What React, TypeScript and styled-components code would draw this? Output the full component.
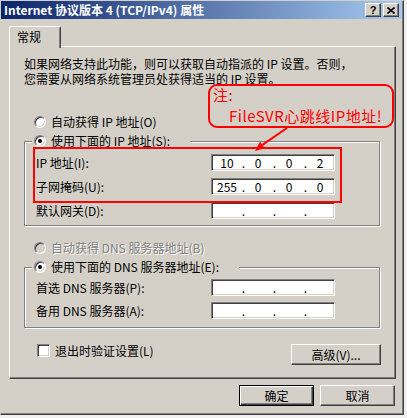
import React from "react";
import styled, { createGlobalStyle } from "styled-components";

const GlobalStyle = createGlobalStyle`
  html, body {
    margin: 0;
    padding: 0;
    background: #f0f0f0;
  }
  body {
    font-family: "Noto Sans CJK SC", "Noto Sans", sans-serif;
    font-size: 12px;
    color: #000;
  }
`;

const IP_ROWS = [
  { label: "IP 地址(I):", value: ["10", "0", "0", "2"] },
  { label: "子网掩码(U):", value: ["255", "0", "0", "0"] },
  { label: "默认网关(D):", value: ["", "", "", ""] },
];

const DNS_ROWS = [
  { label: "首选 DNS 服务器(P):", value: ["", "", "", ""] },
  { label: "备用 DNS 服务器(A):", value: ["", "", "", ""] },
];

function IpField({ value }: { value: string[] }) {
  return (
    <IpBox>
      {value.map((octet, idx) => (
        <React.Fragment key={idx}>
          {idx > 0 && <Dot>.</Dot>}
          <Octet>{octet}</Octet>
        </React.Fragment>
      ))}
    </IpBox>
  );
}

export default function App() {
  const ipRows = IP_ROWS.map((row) => (
    <React.Fragment key={row.label}>
      <FieldLabel>{row.label}</FieldLabel>
      <IpField value={row.value} />
    </React.Fragment>
  ));

  const dnsRows = DNS_ROWS.map((row) => (
    <React.Fragment key={row.label}>
      <FieldLabel>{row.label}</FieldLabel>
      <IpField value={row.value} />
    </React.Fragment>
  ));

  return (
    <>
      <GlobalStyle />
      <Window>
        <TitleBar>
          <TitleText>Internet 协议版本 4 (TCP/IPv4) 属性</TitleText>
          <CaptionButtons>
            <CaptionButton>?</CaptionButton>
            <CaptionButton>
              <svg width="8" height="7" viewBox="0 0 8 7">
                <path d="M0.5 0.5 L7.5 6.5 M7.5 0.5 L0.5 6.5" stroke="#000" strokeWidth="1.6" />
              </svg>
            </CaptionButton>
          </CaptionButtons>
        </TitleBar>

        <Body>
          <TabStrip>
            <Tab>常规</Tab>
          </TabStrip>
          <Panel>
            <Intro>
              如果网络支持此功能，则可以获取自动指派的 IP 设置。否则，
              <br />
              您需要从网络系统管理员处获得适当的 IP 设置。
            </Intro>

            <ChoiceRow $top={29}>
              <Radio />
              <span>自动获得 IP 地址(O)</span>
            </ChoiceRow>

            <GroupBox $top={5} $padTop={6} $padBottom={6}>
              <Legend>
                <Radio $checked />
                <span>使用下面的 IP 地址(S):</span>
              </Legend>
              <FieldRows $gap={7}>{ipRows}</FieldRows>
            </GroupBox>

            <ChoiceRow $top={15} $disabled>
              <Radio $disabled />
              <span>自动获得 DNS 服务器地址(B)</span>
            </ChoiceRow>

            <GroupBox $top={5} $padTop={5} $padBottom={8}>
              <Legend>
                <Radio $checked />
                <span>使用下面的 DNS 服务器地址(E):</span>
              </Legend>
              <FieldRows $gap={6}>{dnsRows}</FieldRows>
            </GroupBox>

            <OptionsRow>
              <CheckLabel>
                <CheckBox />
                <span>退出时验证设置(L)</span>
              </CheckLabel>
              <PushButton $width={90}>高级(V)...</PushButton>
            </OptionsRow>
          </Panel>

          <Footer>
            <PushButton $width={75} $default>
              确定
            </PushButton>
            <PushButton $width={75}>取消</PushButton>
          </Footer>
        </Body>

        {/* red annotation drawn over the dialog */}
        <Highlight />
        <Callout>
          <CalloutLine>注:</CalloutLine>
          <CalloutLine $indent>FileSVR心跳线IP地址!</CalloutLine>
        </Callout>
        <Arrow width="60" height="35" viewBox="0 0 60 35">
          <line x1="46" y1="7" x2="21.4" y2="23.9" stroke="#ff0000" strokeWidth="2" />
          <polygon points="14,30 23.7,27.2 19.1,20.6" fill="#ff0000" />
        </Arrow>
      </Window>
    </>
  );
}

const Window = styled.div`
  position: relative;
  width: 404px;
  height: 415px;
  box-sizing: border-box;
  display: flex;
  flex-direction: column;
  padding: 0 1px 1px 0;
  background: #d4d0c8;
  border: 1px solid;
  border-color: #d4d0c8 #404040 #404040 #d4d0c8;
  box-shadow: inset -1px -1px 0 #808080;
`;

const TitleBar = styled.div`
  height: 18px;
  flex-shrink: 0;
  display: flex;
  align-items: center;
  padding: 0 3px;
  background: linear-gradient(to right, #0a246a, #a6caf0);
`;

const TitleText = styled.span`
  color: #fff;
  font-weight: bold;
  line-height: 18px;
  white-space: nowrap;
`;

const CaptionButtons = styled.div`
  margin-left: auto;
  display: flex;
  gap: 2px;
`;

const CaptionButton = styled.button`
  width: 16px;
  height: 14px;
  box-sizing: border-box;
  padding: 0;
  display: flex;
  align-items: center;
  justify-content: center;
  background: #d4d0c8;
  border: 1px solid;
  border-color: #fff #404040 #404040 #fff;
  box-shadow: inset -1px -1px 0 #808080;
  font: bold 11px "Liberation Sans", sans-serif;
  color: #000;
`;

const Body = styled.div`
  flex: 1;
  display: flex;
  flex-direction: column;
  padding: 7px 6px 0 8px;
`;

const TabStrip = styled.div`
  height: 20px;
  flex-shrink: 0;
  display: flex;
  align-items: flex-start;
`;

const Tab = styled.div`
  position: relative;
  z-index: 1;
  width: 52px;
  height: 22px;
  box-sizing: border-box;
  padding: 2px 0 0 7px;
  line-height: 16px;
  background: #d4d0c8;
  border-left: 1px solid #fff;
  border-top: 1px solid #fff;
  border-right: 1px solid #404040;
  border-radius: 2px 2px 0 0;
  box-shadow: inset -1px 0 0 #808080;
`;

const Panel = styled.div`
  height: 333px;
  flex-shrink: 0;
  box-sizing: border-box;
  display: flex;
  flex-direction: column;
  padding: 9px 14px 0 14px;
  border: 1px solid;
  border-color: #fff #404040 #404040 #fff;
  box-shadow: inset -1px -1px 0 #808080;
`;

const Intro = styled.p`
  margin: 0;
  line-height: 15px;
  white-space: nowrap;
`;

const ChoiceRow = styled.div<{ $top: number; $disabled?: boolean }>`
  margin-top: ${(p) => p.$top}px;
  height: 14px;
  display: flex;
  align-items: center;
  gap: 5px;
  padding-left: 10px;
  line-height: 14px;
  white-space: nowrap;
  color: ${(p) => (p.$disabled ? "#808080" : "#000")};
  text-shadow: ${(p) => (p.$disabled ? "1px 1px 0 #fff" : "none")};
`;

const Radio = styled.span<{ $checked?: boolean; $disabled?: boolean }>`
  position: relative;
  flex-shrink: 0;
  width: 12px;
  height: 12px;
  box-sizing: border-box;
  border-radius: 50%;
  background: ${(p) => (p.$disabled ? "#d4d0c8" : "#fff")};
  border: 1px solid;
  border-color: #808080 #fff #fff #808080;
  box-shadow: inset 1px 1px 0 #404040, inset -1px -1px 0 #d4d0c8;

  &::after {
    content: "";
    display: ${(p) => (p.$checked ? "block" : "none")};
    position: absolute;
    left: 3px;
    top: 3px;
    width: 4px;
    height: 4px;
    border-radius: 50%;
    background: #000;
  }
`;

const GroupBox = styled.fieldset<{ $top: number; $padTop: number; $padBottom: number }>`
  margin: ${(p) => p.$top}px 0 0 0;
  width: 356px;
  min-width: 0;
  box-sizing: border-box;
  padding: ${(p) => p.$padTop}px 0 ${(p) => p.$padBottom}px 0;
  border: 1px solid #808080;
  box-shadow: inset 1px 1px 0 #fff, 1px 1px 0 #fff;
`;

const Legend = styled.legend`
  margin-left: 7px;
  padding: 0 20px 0 2px;
  height: 14px;
  display: flex;
  align-items: center;
  gap: 5px;
  line-height: 14px;
  white-space: nowrap;
  background: #d4d0c8;
`;

const FieldRows = styled.div<{ $gap: number }>`
  display: grid;
  grid-template-columns: 175px 124px;
  row-gap: ${(p) => p.$gap}px;
  align-items: center;
  padding-left: 11px;
`;

const FieldLabel = styled.span`
  line-height: 17px;
  white-space: nowrap;
`;

const IpBox = styled.div`
  width: 124px;
  height: 17px;
  box-sizing: border-box;
  display: flex;
  align-items: center;
  padding-left: 2px;
  background: #fff;
  border: 1px solid;
  border-color: #808080 #fff #fff #808080;
  box-shadow: inset 1px 1px 0 #404040, inset -1px -1px 0 #d4d0c8;
`;

const Octet = styled.span`
  flex-shrink: 0;
  width: 26px;
  text-align: center;
  line-height: 15px;
`;

const Dot = styled.span`
  flex-shrink: 0;
  width: 5px;
  text-align: right;
  line-height: 15px;
`;

const OptionsRow = styled.div`
  margin-top: 16px;
  display: flex;
  justify-content: space-between;
  align-items: flex-start;
`;

const CheckLabel = styled.label`
  display: flex;
  align-items: center;
  gap: 5px;
  padding-left: 13px;
  height: 13px;
  line-height: 13px;
  white-space: nowrap;
`;

const CheckBox = styled.span`
  width: 13px;
  height: 13px;
  box-sizing: border-box;
  background: #fff;
  border: 1px solid;
  border-color: #808080 #fff #fff #808080;
  box-shadow: inset 1px 1px 0 #404040, inset -1px -1px 0 #d4d0c8;
`;

const PushButton = styled.button<{ $width: number; $default?: boolean }>`
  width: ${(p) => p.$width}px;
  height: 21px;
  box-sizing: border-box;
  padding: 0;
  background: #d4d0c8;
  font-family: "Noto Sans CJK SC", "Noto Sans", sans-serif;
  font-size: 12px;
  color: #000;
  border: 1px solid;
  border-color: ${(p) => (p.$default ? "#000" : "#fff #404040 #404040 #fff")};
  box-shadow: ${(p) =>
    p.$default
      ? "inset 1px 1px 0 #fff, inset -1px -1px 0 #404040, inset -2px -2px 0 #808080"
      : "inset -1px -1px 0 #808080"};
`;

const Footer = styled.div`
  margin-top: 6px;
  display: flex;
  justify-content: flex-end;
  gap: 6px;
  padding-right: 1px;
`;

const Highlight = styled.div`
  position: absolute;
  left: 32px;
  top: 146px;
  width: 309px;
  height: 56px;
  box-sizing: border-box;
  border: 2px solid #ff0000;
`;

const Callout = styled.div`
  position: absolute;
  left: 207px;
  top: 83px;
  width: 186px;
  height: 44px;
  box-sizing: border-box;
  padding-left: 3px;
  border: 2px solid #ff0000;
  border-radius: 9px;
  color: #ff0000;
  font-size: 15px;
  letter-spacing: 0.5px;
`;

const CalloutLine = styled.div<{ $indent?: boolean }>`
  line-height: 17px;
  margin-top: ${(p) => (p.$indent ? 4 : 0)}px;
  padding-left: ${(p) => (p.$indent ? 16 : 0)}px;
  white-space: nowrap;
`;

const Arrow = styled.svg`
  position: absolute;
  left: 240px;
  top: 120px;
`;
